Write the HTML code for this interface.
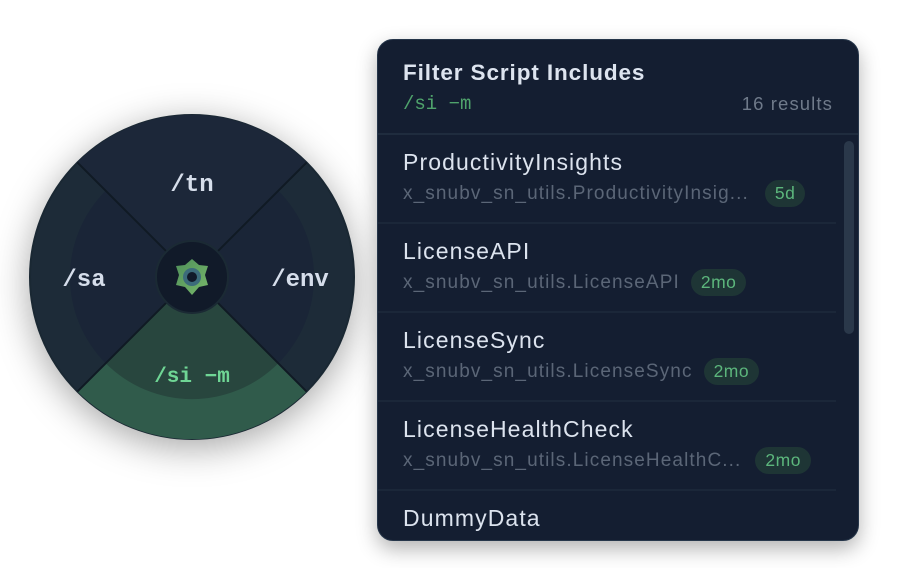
<!DOCTYPE html>
<html><head><style>
body{margin:0;width:910px;height:568px;background:#fff;position:relative;overflow:hidden;font-family:"Liberation Sans",sans-serif}
.wheel{position:absolute;left:0;top:85px;width:384px;height:384px;filter:drop-shadow(0 8px 18px rgba(0,0,0,.35))}
.panel{position:absolute;left:377px;top:39px;width:482px;height:502px;background:#141e31;border-radius:16px;box-shadow:0 8px 20px rgba(0,0,0,.3);overflow:hidden;border:1px solid #26364a;box-sizing:border-box}
.hd{position:absolute;left:25px;top:20px;font-size:22.5px;letter-spacing:0.9px;font-weight:bold;color:#dde4ef}
.q{position:absolute;left:25px;top:53px;font-family:"Liberation Mono",monospace;font-size:19px;color:#4fa36c}
.cnt{position:absolute;right:25px;top:53px;font-size:18.5px;letter-spacing:1.1px;color:#6f7a8a}
.hline{position:absolute;left:0;right:0;top:93px;height:2px;background:#1f2c3e}
.row{position:absolute;left:0;width:458px;height:89px;border-bottom:2px solid #1b2739;box-sizing:border-box}
.t{position:absolute;left:25px;top:14px;font-size:23px;letter-spacing:1.1px;color:#dce3ee}
.s{position:absolute;left:25px;top:45px;font-size:19px;letter-spacing:1.1px;color:#5b6677;white-space:nowrap;display:flex;align-items:center}
.b{display:inline-block;background:#1e3535;color:#5cb67c;border-radius:14px;padding:3px 10px;margin-left:11px;font-size:17.5px;letter-spacing:0.5px}
.sb{position:absolute;left:466px;top:101px;width:10px;height:193px;border-radius:5px;background:#2a384a}
</style></head><body>
<svg class="wheel" viewBox="0 85 384 384">
<defs><linearGradient id="g" x1="0" y1="0" x2="1" y2="1"><stop offset="0" stop-color="#4f8f5a"/><stop offset="1" stop-color="#78b86a"/></linearGradient></defs>
<circle cx="192" cy="277" r="162" fill="#1d2b38" stroke="#1a2833" stroke-width="2"/>
<circle cx="192" cy="277" r="122" fill="#1a2537"/>
<path d="M192,277 L77.4,162.4 A162 162 0 0 1 306.6,162.4 Z" fill="#1c2739"/>
<path d="M192,277 L306.6,391.6 A162 162 0 0 1 77.4,391.6 Z" fill="#305b4b"/>
<path d="M192,277 L278.3,363.3 A122 122 0 0 1 105.7,363.3 Z" fill="#28463e"/>
<line x1="77.4" y1="162.4" x2="306.6" y2="391.6" stroke="#101a24" stroke-width="2"/>
<line x1="306.6" y1="162.4" x2="77.4" y2="391.6" stroke="#101a24" stroke-width="2"/>
<circle cx="192" cy="277" r="36" fill="#111a29" stroke="#1b2a34" stroke-width="2"/>
<path d="M192,259 L199,265 L208,266 L205,275 L208,285 L199,287 L192,295 L185,287 L176,285 L179,275 L176,266 L185,265 Z" fill="url(#g)"/>
<circle cx="192" cy="277" r="9" fill="#3c6b7a"/>
<circle cx="192" cy="277" r="5" fill="#111a29"/>
<g font-family="Liberation Mono,monospace" font-weight="bold" font-size="24" text-anchor="middle">
<text x="192" y="191" fill="#d6deeb">/tn</text>
<text x="84" y="286" fill="#d6deeb">/sa</text>
<text x="300" y="286" fill="#d6deeb">/env</text>
<text x="192" y="382" fill="#6fd695" font-size="21">/si −m</text>
</g>
</svg>
<div class="panel">
<div class="hd">Filter Script Includes</div>
<div class="q">/si −m</div>
<div class="cnt">16 results</div>
<div class="hline"></div>
<div class="row" style="top:95px"><div class="t">ProductivityInsights</div><div class="s">x_snubv_sn_utils.ProductivityInsig...<span class="b" style="margin-left:16px">5d</span></div></div>
<div class="row" style="top:184px"><div class="t">LicenseAPI</div><div class="s">x_snubv_sn_utils.LicenseAPI<span class="b">2mo</span></div></div>
<div class="row" style="top:273px"><div class="t">LicenseSync</div><div class="s">x_snubv_sn_utils.LicenseSync<span class="b">2mo</span></div></div>
<div class="row" style="top:362px"><div class="t">LicenseHealthCheck</div><div class="s">x_snubv_sn_utils.LicenseHealthC...<span class="b" style="margin-left:14px">2mo</span></div></div>
<div class="row" style="top:451px;border:none"><div class="t">DummyData</div></div>
<div class="sb"></div>
</div>
</body></html>
